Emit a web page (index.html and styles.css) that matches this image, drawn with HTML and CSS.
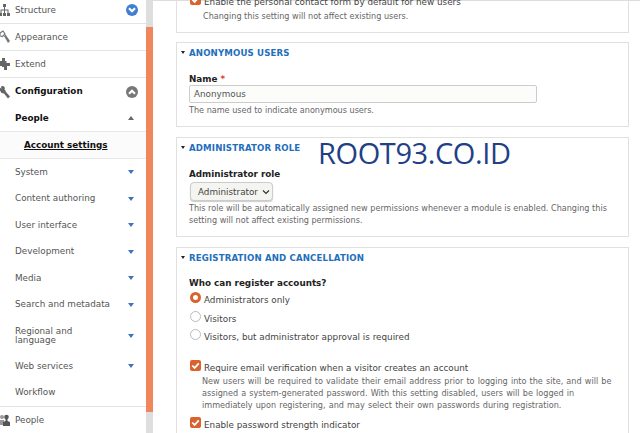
FILE: index.html
```html
<!DOCTYPE html>
<html lang="en">
<head>
<meta charset="utf-8">
<title>Account settings</title>
<link rel="stylesheet" href="styles.css">
</head>
<body>
<div class="app">
  <nav class="side">
    <div class="side-list">
      <a class="row top first"><svg class="ico" viewBox="0 0 10 14"><path d="M3 1h3v3H5v2.500h3.500V10H10v3H7v-3h.500V7.500h-2.500V10H6v3H3v-3h1V7.500H1.500V10H2v3h-2v-3h.500V6.500H4V4H3z" fill="#666"/></svg><span class="lbl">Structure</span><span class="disc blue"><svg viewBox="0 0 10 10"><path d="M2.500 3.500L5 6l2.500-2.500" fill="none" stroke="#fff" stroke-width="1.800"/></svg></span></a>
      <a class="row top"><svg class="ico" viewBox="0 0 10 14"><path d="M0 3l3-2 2 3-2.500 2.500L0 6z" fill="none" stroke="#777" stroke-width="1.200"/><path d="M4 6l1.500-1.500L10 11l-2 2z" fill="#777"/></svg><span class="lbl">Appearance</span></a>
      <a class="row top"><svg class="ico" viewBox="0 0 10 14"><path d="M0 4h2V1h3v3h1.500v2H10v3H7v4H4v-3H2V9H0z" fill="#666"/></svg><span class="lbl">Extend</span></a>
      <a class="row top open"><svg class="ico" viewBox="0 0 10 14"><path d="M0 3.500L2 1.500l-.5 2L3 5l2-.5 1 2.500 4 4.500-2 2-4-5-2.500-.5-1.500-2.500z" fill="#666"/><path d="M1.500 1h2L5 3 4 5.500 1.500 5z" fill="#666"/></svg><span class="lbl strong">Configuration</span><span class="disc grey"><svg viewBox="0 0 10 10"><path d="M2.500 6.500L5 4l2.500 2.500" fill="none" stroke="#fff" stroke-width="1.800"/></svg></span></a>
      <a class="row sub"><span class="lbl strong">People</span><i class="tri up"></i></a>
      <a class="row leaf"><span class="lbl strong current">Account settings</span></a>
      <a class="row sub plain"><span class="lbl">System</span><i class="tri"></i></a>
      <a class="row sub plain"><span class="lbl">Content authoring</span><i class="tri"></i></a>
      <a class="row sub plain"><span class="lbl">User interface</span><i class="tri"></i></a>
      <a class="row sub plain"><span class="lbl">Development</span><i class="tri"></i></a>
      <a class="row sub plain"><span class="lbl">Media</span><i class="tri"></i></a>
      <a class="row sub plain"><span class="lbl">Search and metadata</span><i class="tri"></i></a>
      <a class="row sub plain tall"><span class="lbl">Regional and language</span><i class="tri"></i></a>
      <a class="row sub plain"><span class="lbl">Web services</span><i class="tri"></i></a>
      <a class="row sub plain"><span class="lbl">Workflow</span></a>
      <a class="row top people"><svg class="ico" viewBox="0 0 10 14"><circle cx="2" cy="4" r="2" fill="#999"/><path d="M0 12V7h4v5z" fill="#999"/><circle cx="6.500" cy="4" r="2.300" fill="#555"/><path d="M5.500 6h2v2l2.500 1v4H3V9l2.500-1z" fill="#555"/></svg><span class="lbl">People</span></a>
    </div>
    <div class="track"><div class="thumb"></div></div>
  </nav>
  <main class="main">
    <section class="card cut">
      <div class="check-row"><span class="box on"><svg viewBox="0 0 10 10"><path d="M2 5l2.200 2.200L8 3" fill="none" stroke="#fff" stroke-width="1.600"/></svg></span><span class="opt">Enable the personal contact form by default for new users</span></div>
      <p class="desc inset">Changing this setting will not affect existing users.</p>
    </section>
    <section class="card">
      <h2 class="head"><i class="caret"></i>ANONYMOUS USERS</h2>
      <div class="body">
        <div class="label">Name <b class="req">*</b></div>
        <div class="input">Anonymous</div>
        <p class="desc">The name used to indicate anonymous users.</p>
      </div>
    </section>
    <section class="card">
      <h2 class="head"><i class="caret"></i>ADMINISTRATOR ROLE</h2>
      <div class="body">
        <div class="label">Administrator role</div>
        <div class="select">Administrator<svg viewBox="0 0 8 6"><path d="M1 1.500l3 3 3-3" fill="none" stroke="#333" stroke-width="1.200"/></svg></div>
        <p class="desc">This role will be automatically assigned new permissions whenever a module is enabled. Changing this setting will not affect existing permissions.</p>
      </div>
    </section>
    <section class="card">
      <h2 class="head"><i class="caret"></i>REGISTRATION AND CANCELLATION</h2>
      <div class="body reg">
        <div class="label">Who can register accounts?</div>
        <div class="radio-row"><span class="radio on"></span><span class="opt">Administrators only</span></div>
        <div class="radio-row"><span class="radio"></span><span class="opt">Visitors</span></div>
        <div class="radio-row"><span class="radio"></span><span class="opt">Visitors, but administrator approval is required</span></div>
        <div class="check-row gap"><span class="box on"><svg viewBox="0 0 10 10"><path d="M2 5l2.200 2.200L8 3" fill="none" stroke="#fff" stroke-width="1.600"/></svg></span><span class="opt">Require email verification when a visitor creates an account</span></div>
        <p class="desc wide">New users will be required to validate their email address prior to logging into the site, and will be assigned a system-generated password. With this setting disabled, users will be logged in immediately upon registering, and may select their own passwords during registration.</p>
        <div class="check-row next"><span class="box on"><svg viewBox="0 0 10 10"><path d="M2 5l2.200 2.200L8 3" fill="none" stroke="#fff" stroke-width="1.600"/></svg></span><span class="opt">Enable password strength indicator</span></div>
      </div>
    </section>
  </main>
</div>
<div class="mark">ROOT93.CO.ID</div>
</body>
</html>
```
FILE: styles.css
```css
* { box-sizing: border-box; }
html, body { margin: 0; height: 433px; overflow: hidden; background: #fff; }
body { font-family: "DejaVu Sans", sans-serif; font-size: 8.8px; color: #444; position: relative; }
.app { display: flex; height: 433px; overflow: hidden; }

.side { width: 153px; flex: none; display: flex; height: 433px; }
.side-list { width: 146px; flex: none; background: #fff; }
.row { display: flex; align-items: center; color: #555; }
.top { height: 27px; border-bottom: 1px solid #e4e4e4; }
.first { height: 24px; padding-bottom: 3px; }
.ico { width: 10px; height: 14px; flex: none; margin-right: 5px; }
.lbl { flex: 1; line-height: 9px; }
.strong { font-weight: bold; color: #111; }
.disc { width: 12px; height: 12px; border-radius: 50%; margin-right: 8px; flex: none; display: flex; }
.disc svg { width: 12px; height: 12px; }
.blue { background: #3f7fd0; }
.grey { background: #777; }
.open { border-bottom: 0; }
.sub { height: 27px; padding-left: 15px; }
.sub:nth-child(5) { border-bottom: 1px solid #e8e8e8; }
.plain { height: 26.500px; }
.leaf { height: 27px; padding-left: 24px; background: #fbfbfb; border-bottom: 1px solid #e8e8e8; }
.current { text-decoration: underline; }
.tall { height: 35px; }
.tall .lbl { padding-right: 30px; }
.tri { width: 0; height: 0; margin-right: 12px; border-left: 3px solid transparent; border-right: 3px solid transparent; border-top: 4px solid #3f73c0; flex: none; }
.tri.up { border-top: 0; border-bottom: 4px solid #666; }
.people { height: 28px; border-top: 1px solid #e4e4e4; }

.track { width: 7px; flex: none; background: #dedede; padding-top: 27px; }
.thumb { height: 385px; background: #ef865c; }

.main { flex: 1; padding: 0 11px 0 23px; min-width: 0; box-shadow: inset 0 1px 0 #ddd; }
.card { border: 1px solid #e0e0e0; margin-bottom: 10px; }
.cut { height: 41px; margin-top: -8px; padding: 1px 0 0 12px; margin-bottom: 9px; }
.head { margin: 0; height: 21px; padding: 0 0 2px 4px; display: flex; align-items: center; font-size: 8.6px; font-weight: bold; letter-spacing: .15px; color: #1f6fbd; }
.caret { width: 0; height: 0; border-left: 2.500px solid transparent; border-right: 2.500px solid transparent; border-top: 3px solid #222; margin-right: 4px; }
.body { padding: 10px 12px 10px; }
.label { font-weight: bold; color: #222; line-height: 11px; }
.req { color: #e0412b; }
.input { height: 18px; width: 348px; border: 1px solid #ccc; border-radius: 2px; background: #fcfcfa; padding-left: 4px; line-height: 16px; color: #555; }
.desc { margin: 0; color: #666; font-size: 8.1px; line-height: 12px; }
.input + .desc { margin-top: 1px; }
.select { margin: 2px 0 0 1px; height: 19px; width: 83px; display: flex; align-items: center; gap: 4px; padding-left: 7px; border: 1px solid #ccc; border-radius: 4px; background: #f4f4f1; color: #444; box-shadow: 0 1px 1px #ccc; }
.select svg { width: 8px; height: 6px; }
.select + .desc { margin-top: 1px; }
.reg { padding-top: 9px; }
.radio-row { display: flex; height: 18.700px; align-items: flex-start; padding-left: 1px; }
.radio { width: 11px; height: 11px; flex: none; margin: 3px 3px 0 0; border: 1px solid #bbb; border-radius: 50%; background: #fff; }
.radio.on { border: 3.500px solid #d9622f; }
.opt { line-height: 13px; padding-top: 2px; color: #444; }
.radio-row .opt { padding-top: 5px; }
.check-row { display: flex; align-items: flex-start; padding-left: 1px; }
.box { width: 11px; height: 11px; flex: none; margin-right: 3px; border-radius: 2px; background: #d9622f; display: flex; }
.box svg { width: 11px; height: 11px; }
.gap { margin-top: 15px; }
.next { margin-top: 6px; }
.wide { padding-left: 13px; font-size: 8.1px; word-spacing: .6px; }
.cut .desc { margin-top: 1px; padding-left: 14px; }

.mark { position: absolute; left: 318px; top: 134px; font-family: "Open Sans", sans-serif; font-size: 29px; color: #1f3f86; letter-spacing: -.4px; line-height: 38px; }
```
